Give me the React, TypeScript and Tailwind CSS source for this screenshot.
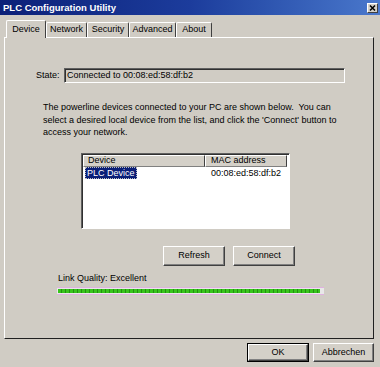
import React from "react";

const F = { fontFamily: '"Liberation Sans", Arial, sans-serif' };

function Btn({ label, className = "" }: { label: string; className?: string }) {
  return (
    <div
      className={`flex items-center justify-center bg-[#d4d0c8] text-[9px] text-black border border-t-white border-l-white border-r-[#404040] border-b-[#404040] shadow-[inset_-1px_-1px_0_#808080] ${className}`}
    >
      {label}
    </div>
  );
}

export default function App() {
  const tabs = ["Network", "Security", "Advanced", "About"];
  const tabW = [41, 42, 47, 36];
  return (
    <div style={F} className="w-[380px] h-[367px] bg-[#d0ccc4] flex flex-col overflow-hidden text-black">
      {/* title bar */}
      <div className="h-[15px] flex items-center justify-between bg-gradient-to-r from-[#0c2078] via-[#1c3c9c] to-[#4a78cc] pl-[3px] pr-[2px]">
        <span className="text-white font-bold text-[9.5px] leading-none">PLC Configuration Utility</span>
        <div className="w-[11px] h-[10px] bg-[#d4d0c8] border border-t-white border-l-white border-r-[#404040] border-b-[#404040] flex items-center justify-center">
          <svg width="7" height="6" viewBox="0 0 7 6">
            <path d="M1 0.5 L6 5.5 M6 0.5 L1 5.5" stroke="black" strokeWidth="1.5" />
          </svg>
        </div>
      </div>

      {/* tabs */}
      <div className="flex items-end pl-[6px] mt-[4px] h-[18px] relative z-10">
        <div className="h-[18px] w-[40px] flex items-center justify-center text-[9px] bg-[#d0ccc4] border-t border-l border-r border-t-white border-l-white border-r-[#404040] -mb-[1px] rounded-t-[2px]">
          Device
        </div>
        {tabs.map((t, i) => (
          <div
            key={t}
            style={{ width: tabW[i] }}
            className="h-[15px] flex items-center justify-center text-[9px] border-t border-l border-r border-t-white border-l-white border-r-[#404040] rounded-t-[2px]"
          >
            {t}
          </div>
        ))}
      </div>

      {/* panel */}
      <div className="ml-[4px] w-[370px] h-[302px] border border-t-white border-l-white border-r-[#202020] border-b-[#202020] flex flex-col">
        {/* state */}
        <div className="flex items-center mt-[30px] ml-[31px]">
          <span className="text-[9px] w-[28px]">State:</span>
          <div className="w-[281px] h-[15px] border border-t-[#606060] border-l-[#606060] border-r-white border-b-white flex items-center pl-[2px] text-[9px] shadow-[inset_1px_1px_0_#303030]">
            Connected to 00:08:ed:58:df:b2
          </div>
        </div>

        {/* paragraph */}
        <div className="ml-[38px] mt-[18px] w-[300px] text-[9px] leading-[12.5px]">
          The powerline devices connected to your PC are shown below.&nbsp; You can select a desired local device from the list, and click the 'Connect' button to access your network.
        </div>

        {/* list */}
        <div className="ml-[76px] mt-[14px] w-[209px] h-[76px] bg-white border border-t-[#606060] border-l-[#606060] border-r-white border-b-white shadow-[inset_1px_1px_0_#303030] flex flex-col">
          <div className="flex h-[13px] text-[9px] pl-[1px] pt-[1px]">
            <div className="w-[122px] bg-[#d4d0c8] border border-t-white border-l-white border-r-[#404040] border-b-[#808080] pl-[4px] flex items-center">Device</div>
            <div className="w-[82px] bg-[#d4d0c8] border border-t-white border-l-white border-r-[#404040] border-b-[#808080] pl-[5px] flex items-center">MAC address</div>
          </div>
          <div className="flex text-[9px] mt-[1px] h-[12px] items-center pl-[3px]">
            <div className="w-[121px]">
              <span className="bg-[#0a1e78] text-white px-[1px] border border-dotted border-[#c0c0c0]">PLC Device</span>
            </div>
            <span className="pl-[5px]">00:08:ed:58:df:b2</span>
          </div>
        </div>

        {/* buttons */}
        <div className="flex ml-[158px] mt-[17px] gap-[8px]">
          <Btn label="Refresh" className="w-[62px] h-[20px]" />
          <Btn label="Connect" className="w-[62px] h-[20px]" />
        </div>

        {/* link quality */}
        <div className="ml-[53px] mt-[6px] text-[9px] leading-[12px]">Link Quality: Excellent</div>
        <div className="ml-[52px] mt-[3px] w-[267px] h-[8px] bg-[#e8e8e8] border-t border-b border-t-[#e0b0e0] border-b-[#e0b0e0] p-[1px]">
          <div className="h-full w-[262px] bg-[repeating-linear-gradient(90deg,#38c41c_0px,#38c41c_3px,#249012_3px,#249012_4px)]" />
        </div>
      </div>

      {/* bottom buttons */}
      <div className="flex justify-end gap-[4px] mt-[4px] pr-[6px]">
        <div className="w-[62px] h-[19px] border border-black">
          <Btn label="OK" className="w-full h-full" />
        </div>
        <Btn label="Abbrechen" className="w-[61px] h-[19px]" />
      </div>
    </div>
  );
}
